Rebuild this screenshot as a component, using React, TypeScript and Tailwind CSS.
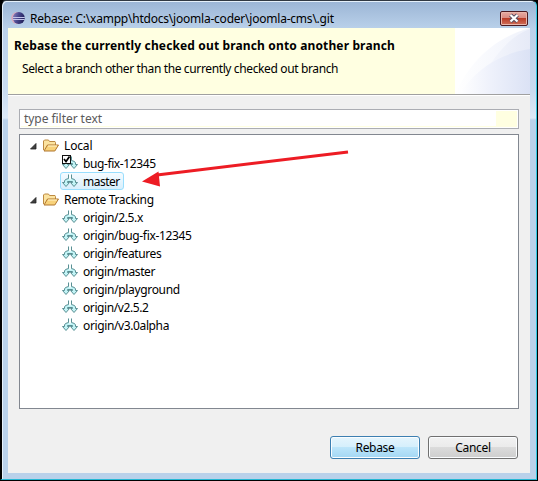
import type { ReactNode } from 'react';

type Branch = { name: string; current?: boolean; selected?: boolean; cls: string };
type Group = { label: string; cls: string; branches: Branch[] };

const GROUPS: Group[] = [
  {
    label: 'Local',
    cls: 'tracking-[-0.15px]',
    branches: [
      { name: 'bug-fix-12345', current: true, cls: 'tracking-[-0.4px]' },
      { name: 'master', selected: true, cls: 'tracking-[-0.5px]' },
    ],
  },
  {
    label: 'Remote Tracking',
    cls: 'tracking-[-0.32px]',
    branches: [
      { name: 'origin/2.5.x', cls: 'tracking-[-0.35px]' },
      { name: 'origin/bug-fix-12345', cls: 'tracking-[-0.35px]' },
      { name: 'origin/features', cls: 'tracking-[-0.4px]' },
      { name: 'origin/master', cls: 'tracking-[-0.42px]' },
      { name: 'origin/playground', cls: 'tracking-[-0.34px]' },
      { name: 'origin/v2.5.2', cls: 'tracking-[-0.4px]' },
      { name: 'origin/v3.0alpha', cls: 'tracking-[-0.38px]' },
    ],
  },
];

function EclipseIcon() {
  return (
    <svg width="14" height="14" viewBox="0 0 14 14" className="shrink-0">
      <defs>
        <linearGradient id="ball" x1="0" y1="0" x2="1" y2="0.3">
          <stop offset="0" stopColor="#8f86bd" />
          <stop offset="0.5" stopColor="#4a4890" />
          <stop offset="1" stopColor="#24245e" />
        </linearGradient>
      </defs>
      <circle cx="6.2" cy="7" r="6" fill="#d9a9bd" />
      <circle cx="7.8" cy="7" r="6" fill="url(#ball)" />
      <path d="M2 6.5h11.800M2 8.500h11.700" stroke="#c3c5ea" strokeWidth="1" />
    </svg>
  );
}

function FolderIcon() {
  return (
    <svg width="16" height="13" viewBox="0 0 16 13" className="shrink-0">
      <path d="M0.500 11V2l1-1h4l1 1.500h5.500l0.500 1v2.500" fill="#fbe3a0" stroke="#bd8a42" />
      <path d="M1 12l3.500-6H15.500l-3.700 6z" fill="#f8d27a" stroke="#b0762f" strokeLinejoin="round" />
      <path d="M5 7h9" stroke="#fff3c9" />
    </svg>
  );
}

function BranchIcon({ current }: { current?: boolean }) {
  return (
    <svg width="16" height="16" viewBox="0 0 16 16" className="shrink-0">
      <path
        d="M6.500 1.500V5.500L3.500 6.500L2.500 8V9.500H0.500L4 13.500L7.500 9.500H5.500V8.500H10.500V9.500H8.500L12 13.500L15.500 9.500H13.500V8L12.500 6.500L9.500 5.500V1.500"
        fill="#c2f4f6"
        stroke="#5a8f93"
        strokeWidth="1"
      />
      <path d="M8 1v5.500" stroke="#fff" strokeWidth="1.800" />
      {current && (
        <g>
          <rect x="0" y="0" width="9" height="9" fill="#111" />
          <rect x="1" y="1" width="7" height="7" fill="#fff" />
          <path d="M2 4l2 2.500L7.500 1.500" fill="none" stroke="#000" strokeWidth="1.700" />
        </g>
      )}
    </svg>
  );
}

function BannerArt() {
  return (
    <svg width="75" height="66" viewBox="0 0 75 66" className="shrink-0">
      <defs>
        <linearGradient id="outer" x1="0" y1="0" x2="1" y2="0">
          <stop offset="0" stopColor="#fff" />
          <stop offset="1" stopColor="#eff2fb" />
        </linearGradient>
        <linearGradient id="wing" x1="0" y1="0" x2="1" y2="0">
          <stop offset="0" stopColor="#f4f6fc" />
          <stop offset="1" stopColor="#e6eaf7" />
        </linearGradient>
        <linearGradient id="inner" x1="0" y1="0" x2="1" y2="0">
          <stop offset="0" stopColor="#fff" />
          <stop offset="0.45" stopColor="#eef1fb" />
          <stop offset="1" stopColor="#dbe2f5" />
        </linearGradient>
      </defs>
      <rect width="75" height="66" fill="#fff" />
      <path d="M0 66C14 36 36 11 75 0v66z" fill="url(#outer)" />
      <path d="M34 38C44 24 54 9 75 1v41z" fill="url(#wing)" />
      <path d="M4 66C20 43 42 26 75 21v45z" fill="url(#inner)" />
    </svg>
  );
}

function TreeGroup({ label, cls, branches }: Group) {
  return (
    <div>
      <div className="flex h-[18px] items-center">
        <svg width="7" height="7" viewBox="0 0 7 7" className="mt-0.5 mr-[6px] ml-[10px] shrink-0">
          <path d="M6 0.500V6H0.500z" fill="#404040" stroke="#222" strokeWidth="0.800" />
        </svg>
        <FolderIcon />
        <span className={`ml-[5px] pt-0.5 ${cls}`}>{label}</span>
      </div>
      {branches.map((b) => (
        <div key={b.name} className="flex h-[18px] pl-10">
          <div
            className={`flex h-[18px] items-center rounded-[3px] border pr-[3px] pl-px ${
              b.selected
                ? 'border-[#99defd] bg-linear-to-b from-[#f5fbff] to-[#d8effc]'
                : 'border-transparent'
            }`}
          >
            <BranchIcon current={b.current} />
            <span className={`ml-[5px] pt-0.5 ${b.cls}`}>{b.name}</span>
          </div>
        </div>
      ))}
    </div>
  );
}

function DialogButton({ primary, children }: { primary?: boolean; children: ReactNode }) {
  return (
    <button
      className={`h-[23px] w-[90px] rounded-[3px] border pt-px tracking-[-0.3px] shadow-[inset_0_0_0_1px_#fbfdff] ${
        primary
          ? 'border-[#3c7fb1] bg-[linear-gradient(#e5f5fd,#d5effc_48%,#bce5fa_50%,#a3d7f4)]'
          : 'border-[#707070] bg-[linear-gradient(#f2f2f2,#ebebeb_48%,#dbdbdb_50%,#cecece)]'
      }`}
    >
      {children}
    </button>
  );
}

export default function App() {
  return (
    <div className="relative h-[481px] w-[538px] bg-black font-['Noto_Sans','Open_Sans',sans-serif] text-[12px] leading-[18px] text-black">
      <div className="flex h-[480px] w-[537px] flex-col overflow-hidden rounded-t-[6px] border-t border-r border-b border-l-2 border-t-[#303842] border-r-[#31c8e2] border-b-[#25b7d3] border-l-black bg-[linear-gradient(#9bb5d5,#bad1ea_28px,#c9dcf0_90px,#dce9f7_117px,#b9d1ea_119px)] pr-[6px] pb-[6px] pl-[6px] shadow-[inset_1px_1px_0_#e5f0fa]">
        {/* Title bar */}
        <div className="flex h-[27px] shrink-0 items-center pt-[6px] pr-[2px] pl-[3px]">
          <EclipseIcon />
          <span className="ml-[5px] flex-1 pt-0.5 tracking-[-0.22px] whitespace-nowrap">
            Rebase: C:\xampp\htdocs\joomla-coder\joomla-cms\.git
          </span>
          <button className="mt-px flex h-[15px] w-7 items-center justify-center rounded-[2px] border border-[#4c1a22] bg-[linear-gradient(#e8aaa2,#d98a80_48%,#bb3d28_50%,#d0705b)] shadow-[inset_0_0_0_1px_#e9b5aa]">
            <svg width="12" height="10" viewBox="0 0 12 10">
              <path d="M2.500 2l7 6.500M9.500 2l-7 6.500" stroke="#514b60" strokeWidth="4" />
              <path d="M2.500 2l7 6.500M9.500 2l-7 6.500" stroke="#fff" strokeWidth="2.300" />
            </svg>
          </button>
        </div>

        <div className="flex flex-1 flex-col bg-[#f0f0f0]">
          {/* Banner */}
          <div className="flex h-[68px] shrink-0 border-b border-white">
            <div className="flex w-full border-b border-[#a0a0a0]">
              <div className="flex-1 bg-[#ffffe1] pt-[9px] pl-[6px] whitespace-nowrap">
                <h1 className="font-bold tracking-[0.14px]">
                  Rebase the currently checked out branch onto another branch
                </h1>
                <p className="mt-[5px] pl-2 tracking-[-0.37px]">
                  Select a branch other than the currently checked out branch
                </p>
              </div>
              <BannerArt />
            </div>
          </div>

          {/* Filter */}
          <div className="mx-[11px] mt-[13px] flex h-5 shrink-0 border border-[#abadb3] bg-white p-px">
            <div className="flex flex-1 items-center border-b border-[#ffffe1] pl-[3px] tracking-[-0.05px] text-[#5a5a5a]">
              type filter text
            </div>
            <div className="w-[21px] bg-[#ffffe1]" />
          </div>

          {/* Branch tree */}
          <div className="mx-[11px] mt-[5px] h-[275px] shrink-0 border border-[#828790] bg-white pt-px">
            {GROUPS.map((g) => (
              <TreeGroup key={g.label} {...g} />
            ))}
          </div>

          <div className="mt-[27px] mr-3 flex justify-end gap-2">
            <DialogButton primary>Rebase</DialogButton>
            <DialogButton>Cancel</DialogButton>
          </div>
        </div>
      </div>

      {/* Arrow over the tree */}
      <svg width="210" height="42" viewBox="0 0 210 42" className="absolute top-[147px] left-[141px]">
        <path d="M16 28L207 5" stroke="#ed1c24" strokeWidth="3" />
        <path d="M1 34.500L17.500 24.500 19 39.500z" fill="#ed1c24" />
      </svg>
    </div>
  );
}
